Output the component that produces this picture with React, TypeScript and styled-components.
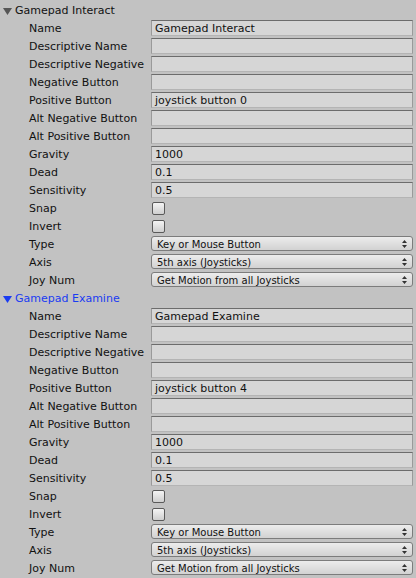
import React from "react";
import styled, { createGlobalStyle } from "styled-components";

const Global = createGlobalStyle`
  html, body { margin: 0; padding: 0; background: #c2c2c2; }
  body { font-family: "DejaVu Sans", Verdana, sans-serif; font-size: 11px; color: #111; }
`;

const Panel = styled.div`
  width: 416px;
  height: 578px;
  padding-top: 1px;
  box-sizing: border-box;
  background: #c2c2c2;
  overflow: hidden;
`;

const Header = styled.div<{ $open?: boolean }>`
  height: 18px;
  box-sizing: border-box;
  padding-top: 2px;
  display: flex;
  align-items: center;
  padding-left: 3px;
  gap: 3px;
  color: ${(p) => (p.$open ? "#1a3cf2" : "#111")};
  line-height: 16px;
`;

const Row = styled.div`
  height: 18px;
  display: grid;
  grid-template-columns: 151px 262px;
  align-items: start;
`;

const Label = styled.div`
  height: 18px;
  box-sizing: border-box;
  padding-left: 29px;
  padding-top: 2px;
  line-height: 16px;
  white-space: nowrap;
  overflow: hidden;
`;

const Field = styled.div`
  margin-top: 1px;
  height: 16px;
  box-sizing: border-box;
  border: 1px solid #9a9a9a;
  border-top-color: #6c6c6c;
  border-bottom-color: #b4b4b4;
  background: #d6d6d6;
  padding: 1px 0 0 3px;
  line-height: 13px;
  white-space: nowrap;
  overflow: hidden;
`;

const Check = styled.div`
  margin-top: 3px;
  margin-left: 1px;
  width: 13px;
  height: 13px;
  box-sizing: border-box;
  border: 1px solid #5a5a5a;
  border-radius: 2px;
  background: linear-gradient(#f4f4f4, #cfcfcf);
`;

const Popup = styled.div`
  margin-top: 1px;
  height: 15px;
  box-sizing: border-box;
  border: 1px solid #7c7c7c;
  border-radius: 3px;
  background: linear-gradient(#ececec, #d2d2d2);
  display: flex;
  align-items: center;
  justify-content: space-between;
  padding: 1px 5px 0 5px;
  font-size: 10px;
  white-space: nowrap;
`;

const Arrows = () => (
  <svg width="5" height="8" viewBox="0 0 5 8">
    <path d="M2.5 0 L5 3 L0 3 Z M2.5 8 L5 5 L0 5 Z" fill="#333" />
  </svg>
);

const Tri = ({ open }: { open?: boolean }) => (
  <svg width="9" height="9" viewBox="0 0 9 9">
    <path d="M0 1 L9 1 L4.5 8 Z" fill={open ? "#1a3cf2" : "#555"} />
  </svg>
);

type Item =
  | { kind: "text"; label: string; value: string }
  | { kind: "check"; label: string }
  | { kind: "popup"; label: string; value: string };

const items = (name: string, btn: string): Item[] => [
  { kind: "text", label: "Name", value: name },
  { kind: "text", label: "Descriptive Name", value: "" },
  { kind: "text", label: "Descriptive Negative", value: "" },
  { kind: "text", label: "Negative Button", value: "" },
  { kind: "text", label: "Positive Button", value: btn },
  { kind: "text", label: "Alt Negative Button", value: "" },
  { kind: "text", label: "Alt Positive Button", value: "" },
  { kind: "text", label: "Gravity", value: "1000" },
  { kind: "text", label: "Dead", value: "0.1" },
  { kind: "text", label: "Sensitivity", value: "0.5" },
  { kind: "check", label: "Snap" },
  { kind: "check", label: "Invert" },
  { kind: "popup", label: "Type", value: "Key or Mouse Button" },
  { kind: "popup", label: "Axis", value: "5th axis (Joysticks)" },
  { kind: "popup", label: "Joy Num", value: "Get Motion from all Joysticks" },
];

const Group = ({ title, open, btn }: { title: string; open?: boolean; btn: string }) => (
  <>
    <Header $open={open}>
      <Tri open={open} />
      <span>{title}</span>
    </Header>
    {items(title, btn).map((it) => (
      <Row key={it.label}>
        <Label>{it.label}</Label>
        {it.kind === "text" && <Field>{it.value}</Field>}
        {it.kind === "check" && <Check />}
        {it.kind === "popup" && (
          <Popup>
            <span>{it.value}</span>
            <Arrows />
          </Popup>
        )}
      </Row>
    ))}
  </>
);

export default function App() {
  return (
    <Panel>
      <Global />
      <Group title="Gamepad Interact" btn="joystick button 0" />
      <Group title="Gamepad Examine" open btn="joystick button 4" />
    </Panel>
  );
}
